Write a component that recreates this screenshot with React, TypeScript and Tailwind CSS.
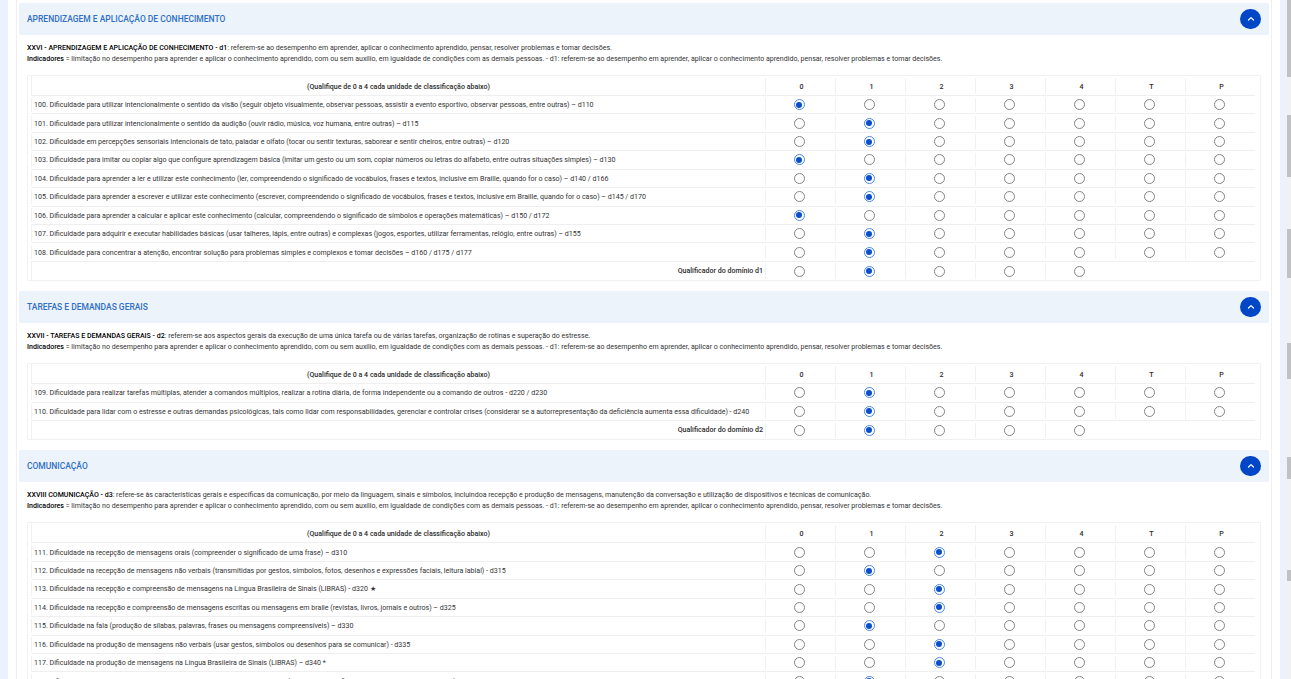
const D1 = "limitação no desempenho para aprender e aplicar o conhecimento aprendido, com ou sem auxílio, em igualdade de condições com as demais pessoas. - d1: referem-se ao desempenho em aprender, aplicar o conhecimento aprendido, pensar, resolver problemas e tomar decisões.";

type Section = {
  title: string;
  lead: string;
  intro: string;
  rows: [string, number][];
  domain: string;
  q: number;
};

const sections: Section[] = [
  {
    title: "APRENDIZAGEM E APLICAÇÃO DE CONHECIMENTO",
    lead: "XXVI - APRENDIZAGEM E APLICAÇÃO DE CONHECIMENTO - d1",
    intro: ": referem-se ao desempenho em aprender, aplicar o conhecimento aprendido, pensar, resolver problemas e tomar decisões.",
    rows: [
      ["100. Dificuldade para utilizar intencionalmente o sentido da visão (seguir objeto visualmente, observar pessoas, assistir a evento esportivo, observar pessoas, entre outras) – d110", 0],
      ["101. Dificuldade para utilizar intencionalmente o sentido da audição (ouvir rádio, música, voz humana, entre outras) – d115", 1],
      ["102. Dificuldade em percepções sensoriais intencionais de tato, paladar e olfato (tocar ou sentir texturas, saborear e sentir cheiros, entre outras) – d120", 1],
      ["103. Dificuldade para imitar ou copiar algo que configure aprendizagem básica (imitar um gesto ou um som, copiar números ou letras do alfabeto, entre outras situações simples) – d130", 0],
      ["104. Dificuldade para aprender a ler e utilizar este conhecimento (ler, compreendendo o significado de vocábulos, frases e textos, inclusive em Braille, quando for o caso) – d140 / d166", 1],
      ["105. Dificuldade para aprender a escrever e utilizar este conhecimento (escrever, compreendendo o significado de vocábulos, frases e textos, inclusive em Braille, quando for o caso) – d145 / d170", 1],
      ["106. Dificuldade para aprender a calcular e aplicar este conhecimento (calcular, compreendendo o significado de símbolos e operações matemáticas) – d150 / d172", 0],
      ["107. Dificuldade para adquirir e executar habilidades básicas (usar talheres, lápis, entre outras) e complexas (jogos, esportes, utilizar ferramentas, relógio, entre outras) – d155", 1],
      ["108. Dificuldade para concentrar a atenção, encontrar solução para problemas simples e complexos e tomar decisões – d160 / d175 / d177", 1],
    ],
    domain: "Qualificador do domínio d1",
    q: 1,
  },
  {
    title: "TAREFAS E DEMANDAS GERAIS",
    lead: "XXVII - TAREFAS E DEMANDAS GERAIS - d2",
    intro: ": referem-se aos aspectos gerais da execução de uma única tarefa ou de várias tarefas, organização de rotinas e superação do estresse.",
    rows: [
      ["109. Dificuldade para realizar tarefas múltiplas, atender a comandos múltiplos, realizar a rotina diária, de forma independente ou a comando de outros - d220 / d230", 1],
      ["110. Dificuldade para lidar com o estresse e outras demandas psicológicas, tais como lidar com responsabilidades, gerenciar e controlar crises (considerar se a autorrepresentação da deficiência aumenta essa dificuldade) - d240", 1],
    ],
    domain: "Qualificador do domínio d2",
    q: 1,
  },
  {
    title: "COMUNICAÇÃO",
    lead: "XXVIII COMUNICAÇÃO - d3",
    intro: ": refere-se às características gerais e específicas da comunicação, por meio da linguagem, sinais e símbolos, incluindoa recepção e produção de mensagens, manutenção da conversação e utilização de dispositivos e técnicas de comunicação.",
    rows: [
      ["111. Dificuldade na recepção de mensagens orais (compreender o significado de uma frase) – d310", 2],
      ["112. Dificuldade na recepção de mensagens não verbais (transmitidas por gestos, símbolos, fotos, desenhos e expressões faciais, leitura labial) - d315", 1],
      ["113. Dificuldade na recepção e compreensão de mensagens na Língua Brasileira de Sinais (LIBRAS) - d320 ★", 2],
      ["114. Dificuldade na recepção e compreensão de mensagens escritas ou mensagens em braile (revistas, livros, jornais e outros) – d325", 2],
      ["115. Dificuldade na fala (produção de sílabas, palavras, frases ou mensagens compreensíveis) – d330", 1],
      ["116. Dificuldade na produção de mensagens não verbais (usar gestos, símbolos ou desenhos para se comunicar) - d335", 2],
      ["117. Dificuldade na produção de mensagens na Língua Brasileira de Sinais (LIBRAS) – d340 *", 2],
      ["118. Dificuldade na conversação e na utilização de dispositivos de comunicação (iniciar, manter e finalizar uma conversa, entre outras) – d350", 1],
    ],
    domain: "",
    q: -1,
  },
];

const cols = ["0", "1", "2", "3", "4", "T", "P"];

function Radio({ on }: { on: boolean }) {
  if (on) {
    return (
      <span className="flex h-[11px] w-[11px] items-center justify-center rounded-full border border-[#4a87e6]">
        <span className="h-[6px] w-[6px] rounded-full bg-[#0a4ecb]" />
      </span>
    );
  }
  return <span className="block h-[11px] w-[11px] rounded-full border border-[#858585] bg-white" />;
}

function Cell({ children }: { children?: React.ReactNode }) {
  return (
    <div className="flex h-full w-[70px] shrink-0 items-center justify-center py-[1.5px]">
      <div className="flex h-full w-full items-center justify-center border-l border-[#f1f1f1] pr-[3px]">{children}</div>
    </div>
  );
}

function Row({ label, value }: { label: string; value: number }) {
  return (
    <div className="flex h-[18.43px] border-b border-[#efefef]">
      <div className="flex min-w-0 flex-1 items-center whitespace-nowrap py-[1.5px]">
        <div className="flex h-full items-center border-l border-[#f1f1f1] pl-[2px] pt-[1.5px] text-[#333333]">{label}</div>
      </div>
      {cols.map((_, i) => (
        <Cell key={i}>
          <Radio on={i === value} />
        </Cell>
      ))}
    </div>
  );
}

function QualRow({ label, value }: { label: string; value: number }) {
  return (
    <div className="flex h-[18.43px]">
      <div className="flex min-w-0 flex-1 items-center justify-end whitespace-nowrap border-l border-[#f1f1f1] pr-[2px] pt-[1px] font-medium text-[#2b2b2b]">
        {label}
      </div>
      {cols.map((c, i) =>
        i < 5 ? (
          <Cell key={c}>
            <Radio on={i === value} />
          </Cell>
        ) : (
          <div key={c} className="w-[70px] shrink-0" />
        ),
      )}
    </div>
  );
}

function SectionBlock({ s }: { s: Section }) {
  return (
    <section className="mb-[10px] last:mb-0">
      <div className="flex h-[32px] items-center justify-between rounded-[2px] bg-[#ecf3fb] pl-[8px] pr-[8px]">
        <h2 className="text-[8.47px] font-medium leading-none text-[#2f6fc4]">{s.title}</h2>
        <button className="flex h-[20px] w-[21px] items-center justify-center rounded-full bg-[#0047c7]">
          <svg width="8" height="8" viewBox="0 0 8 8" fill="none" stroke="white" strokeWidth="1.2" strokeLinecap="round" strokeLinejoin="round">
            <path d="M1.5 5 L4 2.6 L6.5 5" />
          </svg>
        </button>
      </div>
      <div className="px-[8px] pt-[7px]">
        <div className="h-[22px] whitespace-nowrap text-[7.06px] leading-[11px] text-[#333333]">
          <p>
            <span className="font-medium text-black">{s.lead}</span>
            {s.intro}
          </p>
          <p>
            <span className="font-medium text-black">Indicadores</span> = {D1}
          </p>
        </div>
        <div className="mt-[11px] w-[1234px] rounded-[1px] border border-[#f1f1f1] pl-[3px] pr-[5px] text-[7.07px]">
          <div className="flex h-[20px] border-b border-[#efefef] font-medium text-[#2b2b2b]">
            <div className="flex flex-1 items-center justify-center border-l border-[#f1f1f1] pt-[3px]">
              (Qualifique de 0 a 4 cada unidade de classificação abaixo)
            </div>
            {cols.map((c) => (
              <div key={c} className="flex h-full w-[70px] shrink-0 py-[1.5px]">
                <div className="flex h-full w-full items-center justify-center border-l border-[#f1f1f1] pl-[2px] pt-[3px]">{c}</div>
              </div>
            ))}
          </div>
          {s.rows.map(([t, v]) => (
            <Row key={t} label={t} value={v} />
          ))}
          {s.domain && <QualRow label={s.domain} value={s.q} />}
        </div>
      </div>
    </section>
  );
}

export default function App() {
  return (
    <div className="flex h-[679px] w-full overflow-hidden bg-white font-['Roboto',sans-serif]">
      <div className="w-[8px] shrink-0 bg-[#ecf2fd]" />
      <div className="w-[8px] shrink-0" />
      <main className="h-full w-[1256px] shrink-0 overflow-hidden border-x border-[#efefef] px-[2px] pt-[3px]">
        {sections.map((s) => (
          <SectionBlock key={s.title} s={s} />
        ))}
      </main>
      <div className="w-[8px] shrink-0" />
      <div className="w-[7px] shrink-0 bg-[#ecf2fd]" />
      <div className="flex w-[4px] shrink-0 flex-col bg-[#f1f1f1]">
        <div className="h-[77px] bg-[#c1c1c1]" />
        <div className="mt-[38px] h-[62px] bg-[#c1c1c1]" />
        <div className="mt-[52px] h-[49px] bg-[#c1c1c1]" />
        <div className="mt-[65px] h-[36px] bg-[#c1c1c1]" />
        <div className="mt-[78px] h-[22px] bg-[#c1c1c1]" />
        <div className="mt-[91px] h-[11px] bg-[#c1c1c1]" />
      </div>
    </div>
  );
}
